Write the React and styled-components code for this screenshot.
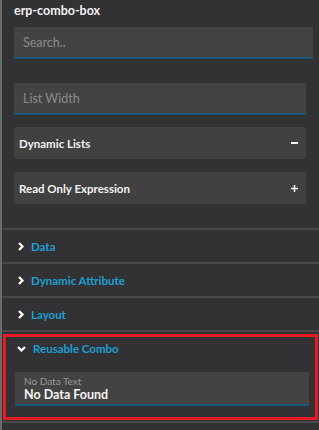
import React from "react";
import styled, { createGlobalStyle } from "styled-components";

const Global = createGlobalStyle`
  html, body {
    margin: 0;
    padding: 0;
    background: #ffffff;
  }
  * {
    box-sizing: border-box;
  }
`;

const Panel = styled.div`
  width: 319px;
  height: 430px;
  overflow: hidden;
  background: #323133;
  border-left: 2px solid #6b6b6b;
  font-family: Lato, "Liberation Sans", sans-serif;
  color: #ececec;
`;

const Top = styled.div`
  padding: 0 6px 0 12px;
  display: flex;
  flex-direction: column;
`;

const Title = styled.div`
  height: 27px;
  padding-top: 3px;
  font-size: 12.5px;
  font-weight: 700;
  color: #f0f0f0;
`;

const Field = styled.div`
  height: 32px;
  background: #444344;
  border-bottom: 2px solid #1b5878;
  display: flex;
  align-items: center;
  padding: 0 9px;
  font-size: 12.5px;
  color: #8a8a8a;
  margin-right: ${(p) => (p.$wide ? "0" : "7px")};
  margin-top: ${(p) => p.$mt || 0}px;
`;

const Row = styled.div`
  height: 32px;
  background: #424142;
  border-radius: 2px;
  display: flex;
  align-items: center;
  justify-content: space-between;
  padding: 0 8px 0 5px;
  margin-right: 7px;
  margin-top: ${(p) => p.$mt || 0}px;
  font-size: 11.5px;
  font-weight: 700;
  color: #f2f2f2;
`;

const Sections = styled.div`
  margin-top: 24px;
`;

const Section = styled.div`
  border-top: 2px solid #4a494a;
  height: 34px;
  display: flex;
  align-items: center;
  gap: 6px;
  padding-left: 14px;
  font-size: 11.5px;
  font-weight: 700;
  color: #1e9fd4;
`;

const Highlight = styled.div`
  border-top: 2px solid #4a494a;
  padding-top: 2px;
`;

const RedBox = styled.div`
  margin: 0 1px;
  border: 3px solid #e41d25;
  height: 86px;
  padding: 0 6px 0 9px;
`;

const OpenHead = styled.div`
  height: 22px;
  display: flex;
  align-items: center;
  gap: 7px;
  padding-left: 2px;
  font-size: 11.5px;
  font-weight: 700;
  color: #1e9fd4;
`;

const DataField = styled.div`
  margin-top: 13px;
  height: 34px;
  background: #444344;
  border-bottom: 2px solid #1b5878;
  padding: 3px 9px 0;
  display: flex;
  flex-direction: column;
`;

const Small = styled.span`
  font-size: 10px;
  color: #9a9a9a;
  line-height: 12px;
`;

const Value = styled.span`
  font-size: 12.5px;
  font-weight: 700;
  color: #f4f4f4;
  line-height: 16px;
`;

const Footer = styled.div`
  margin-top: 1px;
  border-top: 2px solid #4a494a;
`;

const Chevron = ({ down }) => (
  <svg width="9" height="9" viewBox="0 0 9 9">
    {down ? (
      <polyline points="1,3 4.5,6.5 8,3" fill="none" stroke="#fff" strokeWidth="2.2" />
    ) : (
      <polyline points="3,1 6.5,4.5 3,8" fill="none" stroke="#fff" strokeWidth="2.2" />
    )}
  </svg>
);

const Dash = () => (
  <svg width="7" height="4" viewBox="0 0 7 4">
    <rect x="0" y="1" width="7" height="2" fill="#f2f2f2" />
  </svg>
);

const Plus = () => (
  <svg width="7" height="7" viewBox="0 0 7 7">
    <rect x="0" y="2.75" width="7" height="1.5" fill="#f2f2f2" />
    <rect x="2.75" y="0" width="1.5" height="7" fill="#f2f2f2" />
  </svg>
);

export default function App() {
  return (
    <>
      <Global />
      <Panel>
        <Top>
          <Title>erp-combo-box</Title>
          <Field $wide>Search..</Field>
          <Field $mt={24}>List Width</Field>
          <Row $mt={12}>
            Dynamic Lists
            <Dash />
          </Row>
          <Row $mt={13}>
            Read Only Expression
            <Plus />
          </Row>
        </Top>
        <Sections>
          {["Data", "Dynamic Attribute", "Layout"].map((s) => (
            <Section key={s}>
              <Chevron />
              {s}
            </Section>
          ))}
          <Highlight>
            <RedBox>
              <OpenHead>
                <Chevron down />
                Reusable Combo
              </OpenHead>
              <DataField>
                <Small>No Data Text</Small>
                <Value>No Data Found</Value>
              </DataField>
            </RedBox>
          </Highlight>
          <Footer />
        </Sections>
      </Panel>
    </>
  );
}
